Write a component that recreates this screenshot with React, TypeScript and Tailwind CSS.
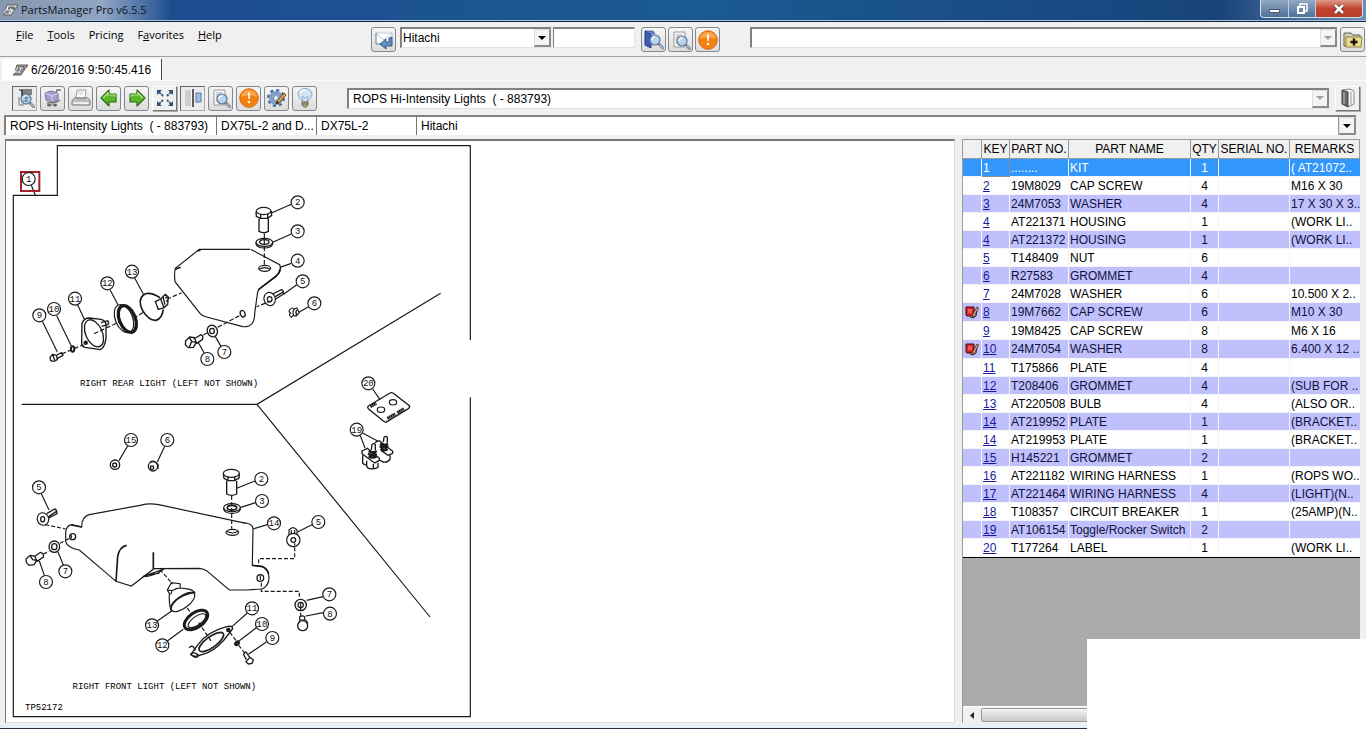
import type { ReactNode } from 'react'
import clsx from 'clsx'

type Part = {
  key: string
  no: string
  name: string
  qty: number
  remarks?: string
  note?: boolean
}

const parts: Part[] = [
  { key: '1', no: '........', name: 'KIT', qty: 1, remarks: '( AT21072..' },
  { key: '2', no: '19M8029', name: 'CAP SCREW', qty: 4, remarks: 'M16 X 30' },
  { key: '3', no: '24M7053', name: 'WASHER', qty: 4, remarks: '17 X 30 X 3..' },
  { key: '4', no: 'AT221371', name: 'HOUSING', qty: 1, remarks: '(WORK LI..' },
  { key: '4', no: 'AT221372', name: 'HOUSING', qty: 1, remarks: '(WORK LI..' },
  { key: '5', no: 'T148409', name: 'NUT', qty: 6 },
  { key: '6', no: 'R27583', name: 'GROMMET', qty: 4 },
  { key: '7', no: '24M7028', name: 'WASHER', qty: 6, remarks: '10.500 X 2..' },
  { key: '8', no: '19M7662', name: 'CAP SCREW', qty: 6, remarks: 'M10 X 30', note: true },
  { key: '9', no: '19M8425', name: 'CAP SCREW', qty: 8, remarks: 'M6 X 16' },
  { key: '10', no: '24M7054', name: 'WASHER', qty: 8, remarks: '6.400 X 12 ..', note: true },
  { key: '11', no: 'T175866', name: 'PLATE', qty: 4 },
  { key: '12', no: 'T208406', name: 'GROMMET', qty: 4, remarks: '(SUB FOR ..' },
  { key: '13', no: 'AT220508', name: 'BULB', qty: 4, remarks: '(ALSO OR..' },
  { key: '14', no: 'AT219952', name: 'PLATE', qty: 1, remarks: '(BRACKET..' },
  { key: '14', no: 'AT219953', name: 'PLATE', qty: 1, remarks: '(BRACKET..' },
  { key: '15', no: 'H145221', name: 'GROMMET', qty: 2 },
  { key: '16', no: 'AT221182', name: 'WIRING HARNESS', qty: 1, remarks: '(ROPS WO..' },
  { key: '17', no: 'AT221464', name: 'WIRING HARNESS', qty: 4, remarks: '(LIGHT)(N..' },
  { key: '18', no: 'T108357', name: 'CIRCUIT BREAKER', qty: 1, remarks: '(25AMP)(N..' },
  { key: '19', no: 'AT106154', name: 'Toggle/Rocker Switch', qty: 2 },
  { key: '20', no: 'T177264', name: 'LABEL', qty: 1, remarks: '(WORK LI..' },
]

const ASSEMBLY = 'ROPS Hi-Intensity Lights\u00a0 ( - 883793)'

/* ---------- icons ---------- */

function Icon({ children, size = 20 }: { children: ReactNode; size?: number }) {
  return (
    <svg width={size} height={size} viewBox="0 0 20 20" fill="none" aria-hidden>
      {children}
    </svg>
  )
}

function Lens({ x = 0, y = 0 }: { x?: number; y?: number }) {
  return (
    <g transform={`translate(${x} ${y})`}>
      <path d="M4 4l4 4" stroke="#7d8ba0" strokeWidth="3" strokeLinecap="round" />
      <path d="M5 5l3 3" stroke="#c3cfdd" strokeWidth="1" strokeLinecap="round" />
      <circle r="5" fill="#b5d4ef" stroke="#62758f" strokeWidth="1.2" />
      <path d="M-3 0a3 3 0 0 1 3-3" stroke="#fff" strokeWidth="1.3" />
    </g>
  )
}

const LogoMark = ({ fill }: { fill: string }) => (
  <svg width="17" height="14" viewBox="0 0 17 14" fill="none" aria-hidden>
    <path d="M5 2h11l-2 3h-3l1-1H7L6 6h7l-4 6H1l2-2h4l2-2H3z" fill={fill} stroke="#555" strokeWidth=".9" />
    <path d="M6 4l-4 6M9 5l-2 5" stroke="#fff" strokeWidth=".8" />
  </svg>
)

const SendIcon = () => (
  <Icon>
    <path d="M2 3h16v11H2z" fill="#fff" stroke="#c8cdd4" />
    <path d="M2 3l8 7 8-7" stroke="#b9c2cd" />
    <path d="M2 3v11h5" stroke="#6d87ab" />
    <path d="M6 14l6-5v3h3V8l3-1v9h-6v3z" fill="#5f8fc4" stroke="#2d4f7d" strokeWidth=".9" />
  </Icon>
)

const BookSearchIcon = () => (
  <Icon>
    <path d="M1 1l6 2v15l-6-3z" fill="#3b5cb8" stroke="#27397e" />
    <path d="M1 1h8l2 3H7z" fill="#6f8ad6" stroke="#27397e" strokeWidth=".6" />
    <Lens x={11} y={10} />
  </Icon>
)

const PageSearchIcon = () => (
  <Icon>
    <path d="M3 2h11v15H3z" fill="#f7f7f7" stroke="#9a9a9a" />
    <path d="M5 5h6M5 7h3M5 9h2M5 11h2M5 13h2" stroke="#a9a9a9" />
    <Lens x={11} y={11} />
  </Icon>
)

const AlertIcon = () => (
  <Icon>
    <circle cx="10" cy="10" r="9.3" fill="#f5800f" stroke="#d66a14" />
    <path d="M2 9a8 7 0 0 1 16 0c-4-2-12-2-16 0z" fill="#ffa648" />
    <path d="M8.8 4.5h2.4L10.7 11H9.3z" fill="#fff" />
    <circle cx="10" cy="14" r="1.3" fill="#fff" />
  </Icon>
)

const FolderAddIcon = () => (
  <Icon>
    <path d="M1 3h7l2 2h7v11H1z" fill="#cdd0bd" stroke="#5f6350" />
    <path d="M3 7h16l-1 10H3z" fill="#ecdc82" stroke="#8f8442" />
    <path d="M11 8.5v7M7.5 12h7" stroke="#111" strokeWidth="2.4" />
  </Icon>
)

const FigureSearchIcon = () => (
  <Icon>
    <path d="M4 2h13M7 4h10M7 6h10M7 2v6" stroke="#151515" strokeWidth="1.2" />
    <path d="M4 9v8h5" stroke="#777" />
    <Lens x={11} y={11} />
    <path d="M8 10h6M8 13h5M11 8v6" stroke="#4a6891" strokeWidth=".8" />
  </Icon>
)

const CartIcon = () => (
  <Icon>
    <path d="M13 5l1-3h4" stroke="#777" strokeWidth="1.5" />
    <path d="M2 5l6-2 7 2v7l-6 2-6-2z" fill="#a3a2cf" stroke="#77769e" />
    <path d="M2 5l7 3 6-3M9 8v6" stroke="#d5d5ee" />
    <path d="M4 15l10-1 3-2" stroke="#777" strokeWidth="1.4" />
    <ellipse cx="6" cy="17" rx="2" ry="1.6" fill="#666" />
    <ellipse cx="12" cy="17" rx="2" ry="1.6" fill="#666" />
    <path d="M8 18l2-3" stroke="#666" />
  </Icon>
)

const PrinterIcon = () => (
  <Icon>
    <path d="M6 2h9l-1 8H5z" fill="#fff" stroke="#9d9d9d" />
    <path d="M7 4h6M7 6h5" stroke="#ccc" />
    <path d="M3 10h14l2 3v4H1v-4z" fill="#dedede" stroke="#777" />
    <path d="M1 13h18" stroke="#999" />
    <path d="M5 11h10" stroke="#888" />
    <path d="M3 15h14" stroke="#fff" />
  </Icon>
)

const ArrowIcon = ({ flip = false }: { flip?: boolean }) => (
  <Icon>
    <g transform={flip ? 'translate(20 0) scale(-1 1)' : undefined}>
      <path d="M2 10l8-8v4h7v8h-7v4z" fill="#5cb52c" stroke="#2c6e12" strokeWidth="1.2" strokeLinejoin="round" />
      <path d="M4 10l5-5v2h7v2" stroke="#b6ea8a" strokeWidth="1.2" />
    </g>
  </Icon>
)

const ExpandIcon = () => (
  <Icon>
    <path d="M2 2h5L2 7zM18 2h-5l5 5zM2 18h5l-5-5zM18 18h-5l5-5z" fill="#2f5275" />
    <path d="M4 4l4 4M16 4l-4 4M4 16l4-4M16 16l-4-4" stroke="#2f5275" strokeWidth="1.8" strokeDasharray="2.5 1" />
  </Icon>
)

const SplitIcon = () => (
  <Icon>
    <path d="M2 2h7v16H2z" fill="#fafafa" />
    <path d="M2 3h6M2 5h6M2 7h6M2 9h6M2 11h6M2 13h6M2 15h6M2 17h6" stroke="#999" strokeWidth=".9" />
    <path d="M10 1v18" stroke="#222" strokeWidth="1.4" />
    <path d="M13 5h5v9h-5z" fill="#9cc0e2" stroke="#5679a1" />
  </Icon>
)

const GearPencilIcon = () => (
  <Icon>
    <circle cx="9" cy="10" r="7.5" stroke="#4c6b9a" strokeWidth="3" strokeDasharray="3 2.89" />
    <circle cx="9" cy="10" r="5" stroke="#7f9cc7" strokeWidth="4" />
    <circle cx="9" cy="10" r="2.5" fill="#eef2f8" stroke="#4c6b9a" strokeWidth=".8" />
    <path d="M9 16l1-3 7-8 2 2-7 8z" fill="#e2a04e" stroke="#5c3d16" strokeWidth=".9" />
    <path d="M9 16l1-3 2 2z" fill="#222" />
  </Icon>
)

const BulbIcon = () => (
  <Icon>
    <path d="M7 14c0-3-4-4-4-8a7 5.5 0 0 1 14 0c0 4-4 5-4 8z" fill="#d3e6f7" stroke="#8aa4c0" />
    <path d="M8 13l-1-5 3 2 3-2-1 5" stroke="#8aa4c0" strokeWidth=".8" />
    <path d="M5 5a5 4 0 0 1 5-3" stroke="#fff" strokeWidth="1.5" />
    <path d="M7 14h6v3l-2 2H9l-2-2z" fill="#b9b083" stroke="#6c6647" />
    <path d="M7 16h6" stroke="#6c6647" />
  </Icon>
)

const DoorIcon = () => (
  <Icon>
    <path d="M5 2l7-1 4 2v13l-6 3z" fill="#f4f4f4" stroke="#888" />
    <path d="M4 2l6 2v15l-6-3z" fill="#6a6a6a" stroke="#444" />
    <path d="M6 4v12" stroke="#a5a5a5" strokeWidth="1.5" />
    <path d="M13 4v13" stroke="#bbb" strokeWidth="1.5" />
  </Icon>
)

const NoteIcon = () => (
  <svg width="14" height="14" viewBox="0 0 14 14" fill="none" className="mx-auto block" role="img" aria-label="Note">
    <path d="M5 12l3 1 3-2 1-6" fill="#fff" stroke="#222" />
    <path d="M1 2h8v9H2L1 10z" fill="#d9262b" stroke="#3a0a0a" />
    <path d="M3 4h4v4H3z" fill="#ef5a55" />
    <path d="M7 11l5-9 1.500 1L9 12z" fill="#f0b7a6" stroke="#301010" strokeWidth=".8" />
  </svg>
)

/* ---------- controls ---------- */

function ToolButton({ label, look = 'flat', children }: { label: string; look?: 'flat' | 'raised' | 'sunken'; children: ReactNode }) {
  return (
    <button
      type="button"
      aria-label={label}
      className={clsx(
        'flex h-[25px] w-[25px] shrink-0 items-center justify-center',
        look === 'flat' && 'rounded-[3px] border border-[#85878a] bg-linear-to-b from-[#f6f6f6] to-[#dcdcdc]',
        look === 'raised' && 'border border-t-white border-l-white border-r-[#777] border-b-[#777] bg-[#f0f0f0] shadow-[1px_1px_0_#aaa]',
        look === 'sunken' && 'border border-t-[#666] border-l-[#666] border-r-[#aaa] border-b-[#aaa] bg-[#ececec]',
      )}
    >
      {children}
    </button>
  )
}

function DropArrow({ muted = false }: { muted?: boolean }) {
  return (
    <span className="pointer-events-none absolute inset-y-0 right-0 flex w-[17px] items-center justify-center border-t border-l border-r-2 border-b-2 border-t-[#ddd] border-r-[#8a8a8a] border-b-[#8a8a8a] border-l-[#ddd] bg-[#f4f4f4]">
      <svg width="8" height="4" viewBox="0 0 8 4" aria-hidden>
        <path d="M0 0h8L4 4z" fill={muted ? '#a0a0a0' : '#000'} />
      </svg>
    </span>
  )
}

function Combo({ label, value, muted, className }: { label: string; value: string; muted?: boolean; className?: string }) {
  return (
    <div className={clsx('relative h-[21px] border-t-2 border-b border-l-2 border-t-[#808080] border-b-[#e3e3e3] border-l-[#808080] bg-white', className)}>
      <select aria-label={label} className="block h-full w-full appearance-none bg-white pl-1 text-[12px] leading-4 text-black outline-none">
        <option>{value}</option>
      </select>
      <DropArrow muted={muted} />
    </div>
  )
}

function TitleBar() {
  return (
    <header className="flex h-[22px] items-start border-b border-[#0d2748] bg-[#a9bdd6]">
      <div className="flex h-5 w-[172px] shrink-0 items-center gap-[2px] bg-linear-to-r from-[#8797ae] via-[#90a6c4] via-60% to-[#1d4d90] pl-[2px]">
        <LogoMark fill="#e6e6e6" />
        <h1 className="font-[Open_Sans,Noto_Sans,sans-serif] text-[11px] leading-5 whitespace-nowrap text-[#0c1420]">
          PartsManager Pro v6.5.5
        </h1>
      </div>
      <div className="h-5 min-w-0 flex-1 bg-linear-to-r from-[#1d4d90] via-[#1b5a93] via-50% to-[#17447a]" />
      <div className="flex h-5 w-[146px] shrink-0 justify-end bg-linear-to-r from-[#17447a] to-[#6f8db2] pr-[3px]">
        <div className="flex h-[18px] rounded-b-[4px] border border-t-0 border-[#d5dfeb] bg-linear-to-b from-[#94a9c4] to-[#4f7099]">
          <button type="button" aria-label="Minimize" className="flex w-7 items-end justify-center border-r border-[#c3cfde] pb-[4px]">
            <span className="h-1 w-[11px] border border-[#4a5a72] bg-white" />
          </button>
          <button type="button" aria-label="Restore" className="flex w-[27px] items-center justify-center border-r border-[#c3cfde]">
            <svg width="12" height="12" viewBox="0 0 12 12" fill="none" aria-hidden>
              <path d="M4 3V1h7v7H9" stroke="#fff" strokeWidth="1.5" />
              <path d="M2 4h6v6H2z" stroke="#fff" strokeWidth="2" />
            </svg>
          </button>
          <button type="button" aria-label="Close" className="flex w-[46px] items-center justify-center rounded-br-[4px] bg-linear-to-b from-[#dc9a8c] via-[#c2432c] via-50% to-[#b5402b]">
            <svg width="12" height="10" viewBox="0 0 12 10" fill="none" aria-hidden>
              <path d="M2 1l8 8M10 1L2 9" stroke="#5a2a26" strokeWidth="4" />
              <path d="M2 1l8 8M10 1L2 9" stroke="#fff" strokeWidth="2.5" />
            </svg>
          </button>
        </div>
      </div>
    </header>
  )
}

function MenuBar() {
  return (
    <div className="flex h-[35px] items-start border-b border-[#a0a0a0] pt-[5px] pr-px">
      <nav className="flex w-[371px] shrink-0 items-start gap-[14px] pl-4 font-[Open_Sans,Noto_Sans,sans-serif] text-[11px] leading-4">
        <button type="button"><u>F</u>ile</button>
        <button type="button"><u>T</u>ools</button>
        <button type="button">Pricing</button>
        <button type="button">F<u>a</u>vorites</button>
        <button type="button"><u>H</u>elp</button>
      </nav>
      <ToolButton label="Send"><SendIcon /></ToolButton>
      <Combo label="Manufacturer" value="Hitachi" className="ml-1 w-[151px] shrink-0 [&>select]:pl-px" />
      <input aria-label="Search text" className="ml-[2px] h-[21px] w-[82px] shrink-0 border border-t-2 border-t-[#808080] border-r-[#e3e3e3] border-b-[#e3e3e3] border-l-[#808080] bg-white px-1 text-[12px]" />
      <div className="ml-[6px] flex shrink-0 gap-[2px]">
        <ToolButton label="Search catalogs"><BookSearchIcon /></ToolButton>
        <ToolButton label="Search pages"><PageSearchIcon /></ToolButton>
        <ToolButton label="Alerts"><AlertIcon /></ToolButton>
      </div>
      <Combo label="Favorite" value="" muted className="mr-[3px] ml-[30px] min-w-0 flex-1" />
      <ToolButton label="Add favorite"><FolderAddIcon /></ToolButton>
    </div>
  )
}

function Toolbar() {
  return (
    <div className="flex h-[33px] items-center pt-px pr-[6px] pl-3">
      <div className="flex w-[335px] shrink-0 items-center gap-[3px]">
        <ToolButton label="Figure search" look="sunken"><FigureSearchIcon /></ToolButton>
        <ToolButton label="Cart"><CartIcon /></ToolButton>
        <ToolButton label="Print"><PrinterIcon /></ToolButton>
        <ToolButton label="Previous"><ArrowIcon /></ToolButton>
        <ToolButton label="Next"><ArrowIcon flip /></ToolButton>
        <ToolButton label="Fit to window" look="raised"><ExpandIcon /></ToolButton>
        <ToolButton label="Split view" look="sunken"><SplitIcon /></ToolButton>
        <ToolButton label="Find in page"><PageSearchIcon /></ToolButton>
        <ToolButton label="Page alerts"><AlertIcon /></ToolButton>
        <ToolButton label="Settings"><GearPencilIcon /></ToolButton>
        <ToolButton label="Tips"><BulbIcon /></ToolButton>
      </div>
      <Combo label="Assembly" value={ASSEMBLY} muted className="mr-[6px] min-w-0 flex-1" />
      <ToolButton label="Close book" look="raised"><DoorIcon /></ToolButton>
    </div>
  )
}

function PathBar() {
  return (
    <div className="mt-px mr-[10px] ml-1 flex h-5 border-t-2 border-l-2 border-[#808080] bg-white text-[12px] leading-[18px] whitespace-nowrap">
      <span className="w-[211px] shrink-0 border-r border-[#777] pl-1">{ASSEMBLY}</span>
      <span className="w-[100px] shrink-0 border-r border-[#777] pl-1">DX75L-2 and D...</span>
      <span className="w-[100px] shrink-0 border-r border-[#777] pl-1">DX75L-2</span>
      <span className="min-w-0 flex-1 pl-1">Hitachi</span>
      <button type="button" aria-label="Show path" className="relative w-[18px] border-l border-[#999]">
        <DropArrow />
      </button>
    </div>
  )
}

/* ---------- exploded view, three drawing units to a pixel ---------- */

const callouts: [number, number, string][] = [
  [86, 537, '1'], [118, 946, '9'], [162, 927, '10'], [225, 896, '11'], [322, 850, '12'], [396, 815, '13'],
  [622, 1077, '8'], [673, 1056, '7'], [893, 607, '2'], [893, 694, '3'], [893, 782, '4'], [908, 844, '5'],
  [943, 910, '6'], [1105, 1150, '20'], [393, 1320, '15'], [502, 1320, '6'], [117, 1462, '5'], [196, 1714, '7'],
  [138, 1746, '8'], [456, 1876, '13'], [487, 1936, '12'], [784, 1437, '2'], [786, 1503, '3'], [822, 1570, '14'],
  [955, 1566, '5'], [988, 1783, '7'], [990, 1841, '8'], [756, 1825, '11'], [786, 1872, '10'], [817, 1914, '9'],
  [1070, 1289, '19'],
]

function Diagram() {
  return (
    <svg
      width="470"
      height="580"
      viewBox="18 423 1410 1740"
      fill="none"
      stroke="#1a1a1a"
      strokeWidth="3.5"
      className="block"
      role="img"
      aria-label="Exploded view of the ROPS hi-intensity lights"
    >
      {/* border and dividers */}
      <g transform="translate(0 420)">
        <path d="M1411 600V17H172V166H40V1730H1411V772" />
        <path d="M65 793H771L1322 460M771 793L1290 1431" />
        <path d="M94 136L106 166" />
      </g>
      <rect x="63" y="516" width="55" height="57" stroke="#a3222d" strokeWidth="6" />

      {/* right rear light */}
      <g transform="translate(0 420)">
        <path d="M750 328H598L526 385Q522 400 525 425L600 520Q606 528 620 531L728 560Q765 563 764 520L773 455Q776 448 782 444L835 402Q845 392 839 374L752 328" />
        <path d="M592 333l10 -3M526 388l16 -6" strokeWidth="5" />
        <path d="M841 386Q838 400 828 409L775 449" strokeWidth="5" />
        <ellipse cx="794" cy="385" rx="18" ry="9" />
        <path d="M777 388q17 -10 34 0" />
        <ellipse cx="728" cy="521" rx="7" ry="10" transform="rotate(-20 728 521)" strokeWidth="4" />
        <path d="M793 280V376M653 562L720 526M610 585l18 -10M500 478L545 458M400 535L430 517M185 642L250 614M282 581L360 545M815 482L770 500" strokeDasharray="14 6" />
        {/* cap screw and washer */}
        <ellipse cx="791" cy="213" rx="22" ry="11" />
        <path d="M768 214l1 15 12 6h22l12 -9 -1 -13M782 222v13M803 222v13M777 236v38q14 8 28 0v-38" strokeWidth="4" />
        <ellipse cx="793" cy="307" rx="25" ry="12" />
        <path d="M768 307v5q4 12 25 12t25 -12v-5" />
        <ellipse cx="793" cy="306" rx="14" ry="7" strokeWidth="4" />
        {/* nut 5, grommet 6 */}
        <ellipse cx="809" cy="477" rx="17" ry="20" transform="rotate(-15 809 477)" />
        <ellipse cx="809" cy="478" rx="7" ry="8" />
        <path d="M818 462l26 -13q7 2 7 13l-24 15M826 470l22 -13" strokeWidth="4" />
        <path d="M870 508q8 -8 12 0l8 -4 8 14 -10 10 -8 -2 -6 6q-10 -8 -2 -12 -8 -6 -2 -12M882 508q-6 8 0 20M890 510q-5 8 0 14" />
        {/* screw 8, washer 7 */}
        <path d="M557 602l12 -11 14 2 6 14 -9 15 -15 1 -9 -9zM581 597l22 -13q8 4 4 15l-18 12M568 592l7 12 13 3M575 604l-7 18" strokeWidth="4" />
        <ellipse cx="637" cy="573" rx="15" ry="18" transform="rotate(-20 637 573)" strokeWidth="4" />
        <ellipse cx="636" cy="573" rx="7" ry="8" strokeWidth="4" />
        {/* bulb 13 */}
        <path d="M430 465Q412 480 428 512Q446 542 468 541Q486 536 490 508M430 465Q446 452 480 473" strokeWidth="5" />
        <path d="M466 485l16 -8 10 26 -17 5zM482 477l14 -14 9 8 -2 22 -11 10M489 470l6 24M495 474l8 -4M498 484l7 -4" strokeWidth="4" />
        {/* ring 12 */}
        <ellipse cx="382" cy="537" rx="24" ry="42" transform="rotate(-22 382 537)" strokeWidth="10" />
        <ellipse cx="372" cy="536" rx="26" ry="44" transform="rotate(-22 372 536)" />
        {/* bracket 11 */}
        <path d="M246 550Q252 534 268 534L303 538Q319 542 318 556L318 595Q314 624 300 629L255 622Q243 618 245 606Z" strokeWidth="4" />
        <ellipse cx="282" cy="580" rx="25" ry="43" transform="rotate(-24 282 580)" strokeWidth="4" />
        <path d="M303 548l20 -6q6 6 0 12l-18 5" strokeWidth="4" />
        <circle cx="257" cy="608" r="5" fill="#1a1a1a" />
        {/* screw 9, washer 10 */}
        <ellipse cx="218" cy="627" rx="5" ry="8" strokeWidth="6" />
        <path d="M150 652l8 -9 12 4 2 12 -10 5 -10 -2zM170 645l15 -7 4 8 -16 9M158 644l6 16" strokeWidth="4" />
        {/* leaders */}
        <path d="M127 544L172 636M170 527L214 618M233 495L253 538M330 449L354 494M404 414L430 462M613 640L594 606M663 619L646 590M874 193L816 218M874 282L818 307M874 370L840 382M890 434L852 462M926 500L898 516" />
      </g>

      {/* label 20 and switches 19 */}
      <g transform="translate(720 1110)">
        <path d="M398 57L420 89M361 197L375 234M368 189L414 214" />
        <path d="M385 108L450 69Q457 66 463 72L508 107Q511 112 505 116L441 155Q436 158 431 154L385 116Q381 112 385 108Z" strokeWidth="4" />
        <ellipse cx="423" cy="119" rx="11" ry="8" />
        <ellipse cx="459" cy="97" rx="11" ry="8" />
        <path d="M391 110l18 -10M442 145l24 -13M472 128l20 -12" strokeWidth="9" strokeDasharray="5 1" />
        <path d="M366 243l16 -8 36 30v6l-14 8 -38 -28zM368 256v24q6 6 12 4 0 12 12 12 14 2 22 -4v-14M404 218l14 -6 40 32v6l-14 6 -20 -14M450 256v12q-6 10 -20 8l-12 -6M380 284v-12M400 296v-14" strokeWidth="4" />
        <path d="M386 243q12 8 24 0M384 251q13 8 26 0M386 259q12 8 24 0M420 221q12 8 24 0M419 229q13 8 26 0M421 237q12 8 22 0" strokeWidth="7" />
        <path d="M394 240l2 -16q6 -6 10 0l0 16M430 216l2 -14q6 -6 10 0v16" strokeWidth="4" />
      </g>

      {/* right front light */}
      <g transform="translate(0 1200)">
        <path d="M738 370L490 317Q455 307 420 316L268 344Q245 350 245 381L215 374Q200 376 197 395V425Q202 444 238 450L348 544L394 558L462 506L600 505Q613 507 622 514L688 570H740L785 567Q807 560 807 532Q805 506 785 500L757 496L759 385Q757 368 715 366" />
        <path d="M215 375l30 6M348 544L353 470Q358 440 380 436M460 457V506M757 496l28 3q16 6 21 22" strokeWidth="5" />
        <path d="M428 530L492 507M428 530q34 0 64 -23M440 524l38 -4" />
        <ellipse cx="697" cy="397" rx="19" ry="9" />
        <path d="M680 394q18 10 34 0" />
        <circle cx="218" cy="410" r="9" strokeWidth="4" />
        <path d="M214 404v11" />
        <circle cx="781" cy="534" r="10" strokeWidth="4" />
        <path d="M781 526v14" />
        <path d="M695 288V386M136 374L197 387M180 430L210 414M130 462l18 -8M480 509L516 550M562 624L573 640M596 668L634 724M690 697L708 722M716 736L738 764M776 490V476H884V430M784 548V574H898V596M902 620V648" strokeDasharray="12 6" />
        {/* cap screw and washer */}
        <ellipse cx="694" cy="220" rx="24" ry="12" />
        <path d="M670 221l2 14 12 7h20l13 -8 1 -13M684 230v12M704 230v12M680 243v39q15 8 30 0v-39" strokeWidth="4" />
        <ellipse cx="696" cy="323" rx="25" ry="12" />
        <path d="M671 323v5q4 12 25 12t25 -12v-5" />
        <ellipse cx="696" cy="323" rx="14" ry="7" strokeWidth="5" />
        {/* grommets */}
        <circle cx="345" cy="194" r="14" strokeWidth="4" />
        <circle cx="344" cy="195" r="6" strokeWidth="4" />
        <circle cx="459" cy="199" r="14" strokeWidth="4" />
        <circle cx="456" cy="203" r="5" strokeWidth="4" />
        <path d="M450 186q12 -8 24 8v12" strokeWidth="4" />
        {/* nut 5 left */}
        <ellipse cx="129" cy="357" rx="17" ry="19" transform="rotate(-20 129 357)" />
        <ellipse cx="128" cy="358" rx="6" ry="8" strokeWidth="4" />
        <path d="M140 341l24 -14q7 2 7 14l-24 13M146 350l22 -15" strokeWidth="4" />
        {/* screw 8 and washer 7 left */}
        <path d="M78 477l12 -11 14 2 6 13 -8 13 -15 2 -8 -9zM103 470l18 -13q12 2 9 14l-19 13M90 467l8 12 12 2" strokeWidth="4" />
        <ellipse cx="163" cy="440" rx="16" ry="17" strokeWidth="4" />
        <ellipse cx="163" cy="440" rx="8" ry="9" strokeWidth="4" />
        {/* bulb 13 */}
        <path d="M514 634Q506 612 508 580L502 570L514 548L540 551L541 564L557 566Q578 568 586 580M502 570l14 2 13 -6 12 -2M516 572l-4 12M514 548l4 4" />
        <ellipse cx="549" cy="606" rx="42" ry="18" transform="rotate(-37 549 606)" />
        <path d="M512 620Q530 586 584 577" strokeWidth="5" />
        {/* ring 12 */}
        <ellipse cx="588" cy="660" rx="40" ry="22" transform="rotate(-35 588 660)" strokeWidth="9" />
        <ellipse cx="591" cy="662" rx="31" ry="13" transform="rotate(-35 591 662)" />
        {/* bracket 11 */}
        <path d="M572 764L594 734Q620 696 680 680Q698 676 698 686L672 720Q640 756 606 764L582 770Z" strokeWidth="4" />
        <ellipse cx="634" cy="726" rx="44" ry="16" transform="rotate(-36 634 726)" strokeWidth="5" />
        <circle cx="685" cy="690" r="5" fill="#1a1a1a" />
        <path d="M568 744q4 -8 12 -4l6 12M572 764q10 -12 24 2 -8 12 -16 0" strokeWidth="4" />
        {/* washer 10, screw 9 */}
        <ellipse cx="711" cy="730" rx="6" ry="4" transform="rotate(-40 711 730)" strokeWidth="7" />
        <path d="M730 762l8 -6 12 18M730 762l9 17M738 785l12 -13 10 8 -4 10 -11 2z" strokeWidth="4" />
        {/* nut 5 right, washer 7, screw 8 */}
        <circle cx="880" cy="420" r="20" />
        <circle cx="880" cy="420" r="7" strokeWidth="4" />
        <path d="M867 404v-14q12 -14 24 0v14M874 390v12M884 390v12" />
        <circle cx="902" cy="615" r="17" strokeWidth="4" />
        <circle cx="902" cy="615" r="8" />
        <path d="M902 607v16M899 660v-10q8 -5 15 0v11" />
        <circle cx="908" cy="677" r="15" strokeWidth="4" />
        <path d="M895 670l6 -10h16l7 10" />
        {/* leaders */}
        <path d="M383 138L357 182M494 139L472 186M124 281L147 330M190 495L174 456M133 526L118 483M472 663L516 632M502 723L550 688M765 243L710 265M767 308L722 322M802 374L759 387M936 374L892 396M969 590L920 601M970 638L917 648M742 639L696 680M769 683L716 724M799 726L745 763" />
      </g>

      {/* callouts */}
      {callouts.map(([x, y, label], i) => (
        <g key={i}>
          <circle cx={x} cy={y} r="19.5" fill={i === 0 ? 'none' : '#fff'} />
          <text x={x} y={y + 9} textAnchor="middle" fill="#111" stroke="none" className="font-['Liberation_Mono',monospace] text-[27px]">
            {label}
          </text>
        </g>
      ))}
      <g fill="#000" stroke="none" className="font-['Liberation_Mono',monospace] text-[27px]">
        <text x="507" y="1157" textAnchor="middle">RIGHT REAR LIGHT (LEFT NOT SHOWN)</text>
        <text x="493" y="2067" textAnchor="middle">RIGHT FRONT LIGHT (LEFT NOT SHOWN)</text>
        <text x="75" y="2130">TP52172</text>
      </g>
    </svg>
  )
}

function PartsTable() {
  return (
    <table className="w-full table-fixed border-separate border-spacing-0 border-b border-black text-[12px] leading-4 whitespace-nowrap">
      <colgroup>
        <col className="w-[19px]" />
        <col className="w-[28px]" />
        <col className="w-[59px]" />
        <col className="w-[122px]" />
        <col className="w-[28px]" />
        <col className="w-[71px]" />
        <col />
      </colgroup>
      <thead>
        <tr className="h-5 bg-[#f0f0f0]">
          {['', 'KEY', 'PART NO.', 'PART NAME', 'QTY', 'SERIAL NO.', 'REMARKS'].map((title) => (
            <th key={title} scope="col" className="border-t border-r border-b border-[#9a9a9a] p-0 text-center font-normal">
              {title}
            </th>
          ))}
        </tr>
      </thead>
      <tbody>
        {parts.map((part, i) => (
          <tr
            key={part.no}
            className={clsx(
              part.note ? 'h-[19px]' : 'h-[18px]',
              i === 0 ? 'bg-[#3297fd] text-white' : i % 2 === 0 ? 'bg-[#c0c0fc] text-[#10103c]' : 'bg-white text-black',
            )}
          >
            <td className="border-r border-b border-[#f4f4f4] p-0">{part.note && <NoteIcon />}</td>
            <td className={clsx('border-r border-b p-0 pl-px', i === 0 ? 'border-[#8a9098]' : 'border-[#f4f4f4]')}>
              {i === 0 ? part.key : <a href={`#part-${part.no}`} className="text-[#1a1a9c] underline">{part.key}</a>}
            </td>
            <td className="border-r border-b border-[#f4f4f4] p-0 pl-px">{part.no}</td>
            <td className="border-r border-b border-[#f4f4f4] p-0 pl-px">{part.name}</td>
            <td className="border-r border-b border-[#f4f4f4] p-0 text-center">{part.qty}</td>
            <td className="border-r border-b border-[#f4f4f4] p-0" />
            <td className="overflow-hidden border-b border-[#f4f4f4] p-0 pl-px">{part.remarks}</td>
          </tr>
        ))}
      </tbody>
    </table>
  )
}

export default function App() {
  return (
    <div className="relative flex min-h-screen flex-col border-b border-[#25303e] bg-[#f0f0f0] font-['Liberation_Sans',Arial,sans-serif] text-[12px] text-black">
      <TitleBar />
      <MenuBar />
      <div className="flex h-6 border-b border-[#fafafa] pt-[2px] pl-[2px]">
        <button type="button" className="flex w-[160px] items-center gap-[2px] border-r border-[#444] bg-white pl-[10px] text-[12px] leading-4 whitespace-nowrap">
          <LogoMark fill="#999" />
          6/26/2016 9:50:45.416
        </button>
      </div>
      <Toolbar />
      <PathBar />
      <main className="flex flex-1 gap-[7px] pt-1 pr-[6px] pb-px pl-[5px]">
        <section className="min-w-0 flex-1 overflow-hidden border border-t-2 border-t-[#777] border-r-[#ddd] border-b-[#ddd] border-l-[#777] bg-white">
          <Diagram />
        </section>
        <section className="flex w-[398px] shrink-0 flex-col border-l border-[#9a9a9a] bg-[#ababab]">
          <PartsTable />
          <div className="mt-auto flex h-[17px] items-center border-t border-white bg-[#f0f0f0]">
            <button type="button" aria-label="Scroll left" className="flex w-[18px] justify-center">
              <svg width="4" height="7" viewBox="0 0 4 7" aria-hidden>
                <path d="M4 0v7L0 3.5z" fill="#222" />
              </svg>
            </button>
            <div className="h-[14px] flex-1 rounded-[2px] border border-[#999] bg-linear-to-b from-[#f4f4f4] to-[#c8c8c8]" />
          </div>
        </section>
      </main>
      <div className="h-1 bg-[#e6eef6]" />
      <div className="absolute right-0 bottom-[-1px] h-[90px] w-[279px] bg-white" />
    </div>
  )
}
